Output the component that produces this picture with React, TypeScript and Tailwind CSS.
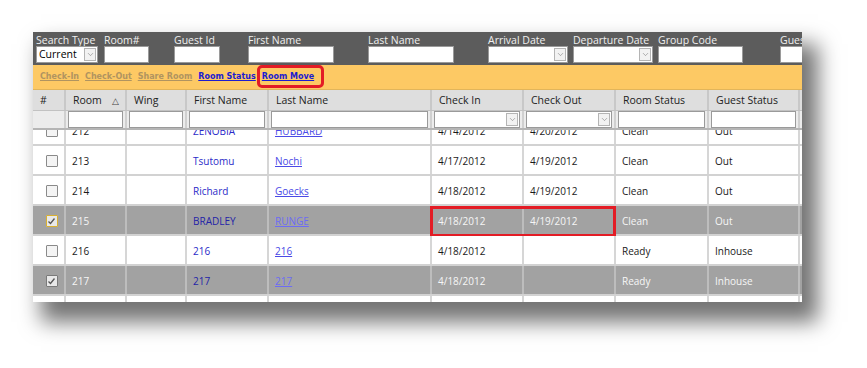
import React from "react";
import { ChevronDown } from "lucide-react";

const COLS = "grid grid-cols-[33px_61px_60px_82px_163px_92px_92px_93px_91px]";

function Select({ w, value = "" }: { w: string; value?: string }) {
  return (
    <div className={`${w} h-[17px] bg-white border border-[#9a9a9a] flex items-center justify-between`}>
      <span className="pl-[2px] text-[10.5px] text-black leading-none">{value}</span>
      <span className="w-[12px] h-[13px] mr-[1px] border border-[#b4b4b4] bg-[#f2f2f2] flex items-center justify-center">
        <ChevronDown size={9} strokeWidth={1.5} className="text-[#777]" />
      </span>
    </div>
  );
}

function TextBox({ w }: { w: string }) {
  return <div className={`${w} h-[17px] bg-white border border-[#9a9a9a]`} />;
}

function Field({ w, label, children }: { w: string; label: string; children: React.ReactNode }) {
  return (
    <div className={`${w} shrink-0 flex flex-col`}>
      <div className="h-[12px] text-[10.5px] leading-[12px] text-[#f0f0f0] whitespace-nowrap">{label}</div>
      {children}
    </div>
  );
}

function Checkbox({ checked, focus }: { checked?: boolean; focus?: boolean }) {
  return (
    <div
      className={`w-[12px] h-[12px] border rounded-[1px] flex items-center justify-center ${
        focus ? "border-[#d9b030] bg-[#e8e8e8]" : checked ? "border-[#7a7a7a] bg-[#e8e8e8]" : "border-[#8a8a8a] bg-[#f4f4f4]"
      }`}
    >
      {checked && (
        <svg width="9" height="9" viewBox="0 0 9 9">
          <path d="M1.5 4.5 L3.5 6.5 L7.5 1.5" fill="none" stroke="#555" strokeWidth="1.3" />
        </svg>
      )}
    </div>
  );
}

type Row = {
  room: string;
  first: string;
  last: string;
  cin: string;
  cout: string;
  rs: string;
  gs: string;
  gray?: boolean;
  checked?: boolean;
  focus?: boolean;
  mark?: boolean;
};

const rows: Row[] = [
  { room: "212", first: "ZENOBIA", last: "HUBBARD", cin: "4/14/2012", cout: "4/20/2012", rs: "Clean", gs: "Out" },
  { room: "213", first: "Tsutomu", last: "Nochi", cin: "4/17/2012", cout: "4/19/2012", rs: "Clean", gs: "Out" },
  { room: "214", first: "Richard", last: "Goecks", cin: "4/18/2012", cout: "4/19/2012", rs: "Clean", gs: "Out" },
  { room: "215", first: "BRADLEY", last: "RUNGE", cin: "4/18/2012", cout: "4/19/2012", rs: "Clean", gs: "Out", gray: true, checked: true, focus: true, mark: true },
  { room: "216", first: "216", last: "216", cin: "4/18/2012", cout: "", rs: "Ready", gs: "Inhouse" },
  { room: "217", first: "217", last: "217", cin: "4/18/2012", cout: "", rs: "Ready", gs: "Inhouse", gray: true, checked: true },
  { room: "", first: "", last: "", cin: "", cout: "", rs: "", gs: "" },
];

function DataRow({ r }: { r: Row }) {
  const bg = r.gray ? "bg-[#a2a2a2]" : "bg-white";
  const line = r.gray ? "border-[#bdbdbd]" : "border-[#d6d6d6]";
  const txt = r.gray ? "text-[#f6f6f6]" : "text-[#1a1a1a]";
  const cell = `h-[28px] flex items-center pl-[6px] pt-[2px] border-r-2 ${line} whitespace-nowrap`;
  return (
    <div className={`relative ${COLS} ${bg} border-b-2 border-[#d2d2d2] text-[10px]`}>
      <div className={`${cell} justify-center pl-0`}>{r.room && <Checkbox checked={r.checked} focus={r.focus} />}</div>
      <div className={`${cell} ${txt}`}>{r.room}</div>
      <div className={cell}></div>
      <div className={`${cell} ${r.gray ? "text-[#2424a8]" : "text-[#2b2bc8]"}`}>{r.first}</div>
      <div className={`${cell}`}>
        <span className={`underline ${r.gray ? "text-[#6c6cf4]" : "text-[#4a4ae6]"}`}>{r.last}</span>
      </div>
      <div className={`${cell} ${txt}`}>{r.cin}</div>
      <div className={`${cell} ${txt}`}>{r.cout}</div>
      <div className={`${cell} ${txt}`}>{r.rs}</div>
      <div className={`${cell} ${txt}`}>{r.gs}</div>
      {r.mark && (
        <div className="absolute left-[397px] top-0 w-[186px] h-[31px] border-[3px] border-[#e31c25]" />
      )}
    </div>
  );
}

export default function App() {
  return (
    <div className="w-[867px] h-[368px] bg-white font-['Open_Sans',sans-serif] pt-[32px] pl-[33px] overflow-hidden">
      <div className="w-[769px] h-[270px] bg-white overflow-hidden shadow-[12px_16px_20px_4px_rgba(0,0,0,0.55)]">
        {/* search bar */}
        <div className="h-[33px] bg-[#5c5c5c] flex pl-[3px] pt-[2px]">
          <Field w="w-[68px]" label="Search Type">
            <Select w="w-[62px]" value="Current" />
          </Field>
          <Field w="w-[70px]" label="Room#">
            <TextBox w="w-[45px]" />
          </Field>
          <Field w="w-[74px]" label="Guest Id">
            <TextBox w="w-[46px]" />
          </Field>
          <Field w="w-[120px]" label="First Name">
            <TextBox w="w-[86px]" />
          </Field>
          <Field w="w-[120px]" label="Last Name">
            <TextBox w="w-[86px]" />
          </Field>
          <Field w="w-[85px]" label="Arrival Date">
            <Select w="w-[80px]" />
          </Field>
          <Field w="w-[85px]" label="Departure Date">
            <Select w="w-[80px]" />
          </Field>
          <Field w="w-[122px]" label="Group Code">
            <TextBox w="w-[85px]" />
          </Field>
          <Field w="w-[60px]" label="Guest Status">
            <TextBox w="w-[60px]" />
          </Field>
        </div>
        {/* action bar */}
        <div className="h-[25px] bg-[#fdc964] border-b border-[#e2b55a] flex items-center pl-[7px] gap-[6px] text-[8px] font-bold font-['DejaVu_Sans',sans-serif]">
          <span className="underline text-[#b09460]">Check-In</span>
          <span className="underline text-[#b09460]">Check-Out</span>
          <span className="underline text-[#b09460]">Share Room</span>
          <span className="underline text-[#1c1cd0]">Room Status</span>
          <span className="relative underline text-[#1c1cd0]">
            Room Move
            <span className="absolute -left-[5px] -right-[10px] -top-[6px] -bottom-[5px] border-[3px] border-[#e31c25] rounded-[5px]" />
          </span>
        </div>
        {/* header */}
        <div className={`${COLS} bg-[#dedede] text-[10.5px] text-[#222] border-b border-[#c2c2c2]`}>
          {["#", "Room", "Wing", "First Name", "Last Name", "Check In", "Check Out", "Room Status", "Guest Status"].map((h) => (
            <div key={h} className="h-[20px] flex items-center pl-[7px] pr-[6px] pt-[2px] border-r-2 border-[#c8c8c8] justify-between">
              <span>{h}</span>
              {h === "Room" && <span className="text-[9px] text-[#444]">△</span>}
            </div>
          ))}
        </div>
        {/* filter row */}
        <div className={`${COLS} bg-[#ececec] border-b-2 border-[#b5b5b5]`}>
          {[0, 1, 2, 3, 4, 5, 6, 7, 8].map((i) => (
            <div key={i} className="h-[17px] flex items-start px-[2px] border-r-2 border-[#d0d0d0]">
              {i === 0 ? null : i === 5 || i === 6 ? (
                <Select w="w-full" />
              ) : (
                <TextBox w="w-full" />
              )}
            </div>
          ))}
        </div>
        {/* body */}
        <div className="h-[172px] overflow-hidden">
          <div className="-mt-[14px]">
            {rows.map((r, i) => (
              <DataRow key={i} r={r} />
            ))}
          </div>
        </div>
      </div>
    </div>
  );
}
